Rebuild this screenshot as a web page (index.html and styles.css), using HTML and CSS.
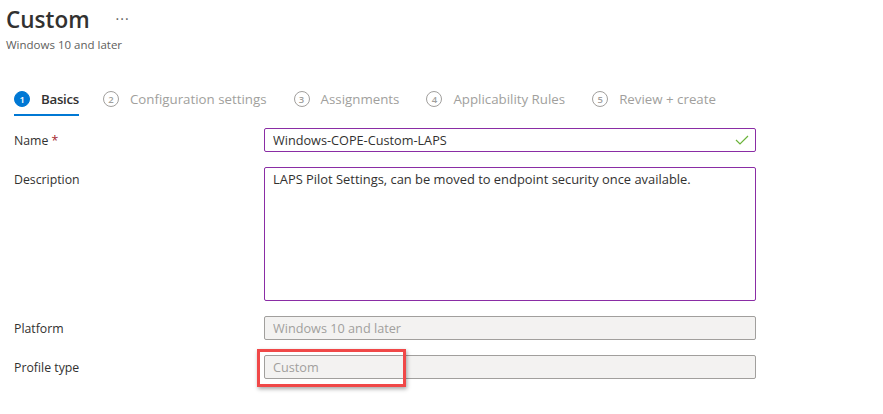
FILE: index.html
```html
<!DOCTYPE html>
<html lang="en">

<head>
  <meta charset="UTF-8">
  <meta name="viewport" content="width=device-width, initial-scale=1.0">
  <link rel="stylesheet" href="styles.css">
  <title>Custom - Windows 10 and later</title>
</head>

<body>
  <div class="header">
    <div class="title-row">
      <h1 class="title">Custom</h1>
      <span class="more">&middot;&middot;&middot;</span>
    </div>
    <p class="subtitle">Windows 10 and later</p>
  </div>

  <div class="steps">
    <div class="step active">
      <span class="step-num">1</span>
      <span class="step-label">Basics</span>
    </div>
    <div class="step">
      <span class="step-num">2</span>
      <span class="step-label">Configuration settings</span>
    </div>
    <div class="step">
      <span class="step-num">3</span>
      <span class="step-label">Assignments</span>
    </div>
    <div class="step">
      <span class="step-num">4</span>
      <span class="step-label">Applicability Rules</span>
    </div>
    <div class="step">
      <span class="step-num">5</span>
      <span class="step-label">Review + create</span>
    </div>
  </div>

  <div class="form">
    <label class="field-label" for="name">Name <span class="required">*</span></label>
    <div class="input-wrap">
      <input class="field" type="text" id="name" value="Windows-COPE-Custom-LAPS">
      <svg class="check" width="14" height="10" viewBox="0 0 14 10">
        <path d="M1 5 L5 9 L13 1" fill="none" stroke="#6bb33a" stroke-width="1.2" />
      </svg>
    </div>

    <label class="field-label" for="description">Description</label>
    <textarea class="field area" id="description">LAPS Pilot Settings, can be moved to endpoint security once available.</textarea>

    <label class="field-label" for="platform">Platform</label>
    <input class="field disabled" type="text" id="platform" value="Windows 10 and later" disabled>

    <label class="field-label" for="profileType">Profile type</label>
    <div class="input-wrap marked">
      <input class="field disabled" type="text" id="profileType" value="Custom" disabled>
    </div>
  </div>
</body>

</html>
```

FILE: styles.css
```css
html, body {
  min-height: 100%;
}

body {
  margin: 0;
  padding-bottom: 30px;
  font-family: 'Open Sans', 'Noto Sans', sans-serif;
  color: #323130;
  background-color: #fff;
}

.header {
  padding: 4px 0 0 6px;
}

.title-row {
  display: flex;
  align-items: center;
  gap: 26px;
}

.title {
  margin: 0;
  font-size: 22.5px;
  font-weight: 600;
  line-height: 32px;
}

.more {
  font-size: 14px;
  color: #605e5c;
  letter-spacing: 1px;
  margin-top: -4px;
}

.subtitle {
  margin: 1px 0 0;
  font-size: 11.5px;
  color: #605e5c;
}

.steps {
  display: flex;
  gap: 27px;
  margin: 33px 0 0 14px;
}

.step {
  display: flex;
  align-items: center;
  gap: 11px;
  height: 28px;
  color: #a19f9d;
  font-size: 13.3px;
  border-bottom: 2px solid transparent;
  padding-bottom: 1px;
}

.step-num {
  box-sizing: border-box;
  width: 16px;
  height: 16px;
  border: 1px solid #a19f9d;
  border-radius: 50%;
  font-size: 9.5px;
  font-weight: 600;
  display: flex;
  align-items: center;
  justify-content: center;
}

.step.active {
  color: #323130;
  font-weight: 600;
  letter-spacing: -0.3px;
  margin-right: -3px;
  border-bottom-color: #0078d4;
}

.step.active .step-num {
  background-color: #0078d4;
  border-color: #0078d4;
  color: #fff;
}

.form {
  display: grid;
  grid-template-columns: 250px 492px;
  row-gap: 15px;
  margin: 12px 0 0 14px;
}

.field-label {
  font-size: 12.3px;
  line-height: 22px;
  padding-top: 2px;
}

.required {
  color: #a4262c;
}

.input-wrap {
  position: relative;
}

.field {
  box-sizing: border-box;
  display: block;
  width: 100%;
  height: 24px;
  margin: 0;
  padding: 0 8px;
  font-family: inherit;
  font-size: 12.7px;
  color: #323130;
  border: 1px solid #8a2da5;
  border-radius: 2px;
  background-color: #fff;
}

.area {
  height: 134px;
  padding: 2px 8px;
  resize: none;
  line-height: 18px;
  font-size: 12.9px;
}

.disabled {
  background-color: #f3f2f1;
  border-color: #a19f9d;
  color: #a19f9d;
}

.check {
  position: absolute;
  right: 7px;
  top: 7px;
}

.marked::after {
  content: "";
  position: absolute;
  z-index: 1;
  left: -7px;
  top: -6px;
  width: 143px;
  height: 32px;
  border: 3px solid #f04848;
  box-shadow: 1px 2px 4px rgba(0, 0, 0, 0.35);
  pointer-events: none;
}
```
